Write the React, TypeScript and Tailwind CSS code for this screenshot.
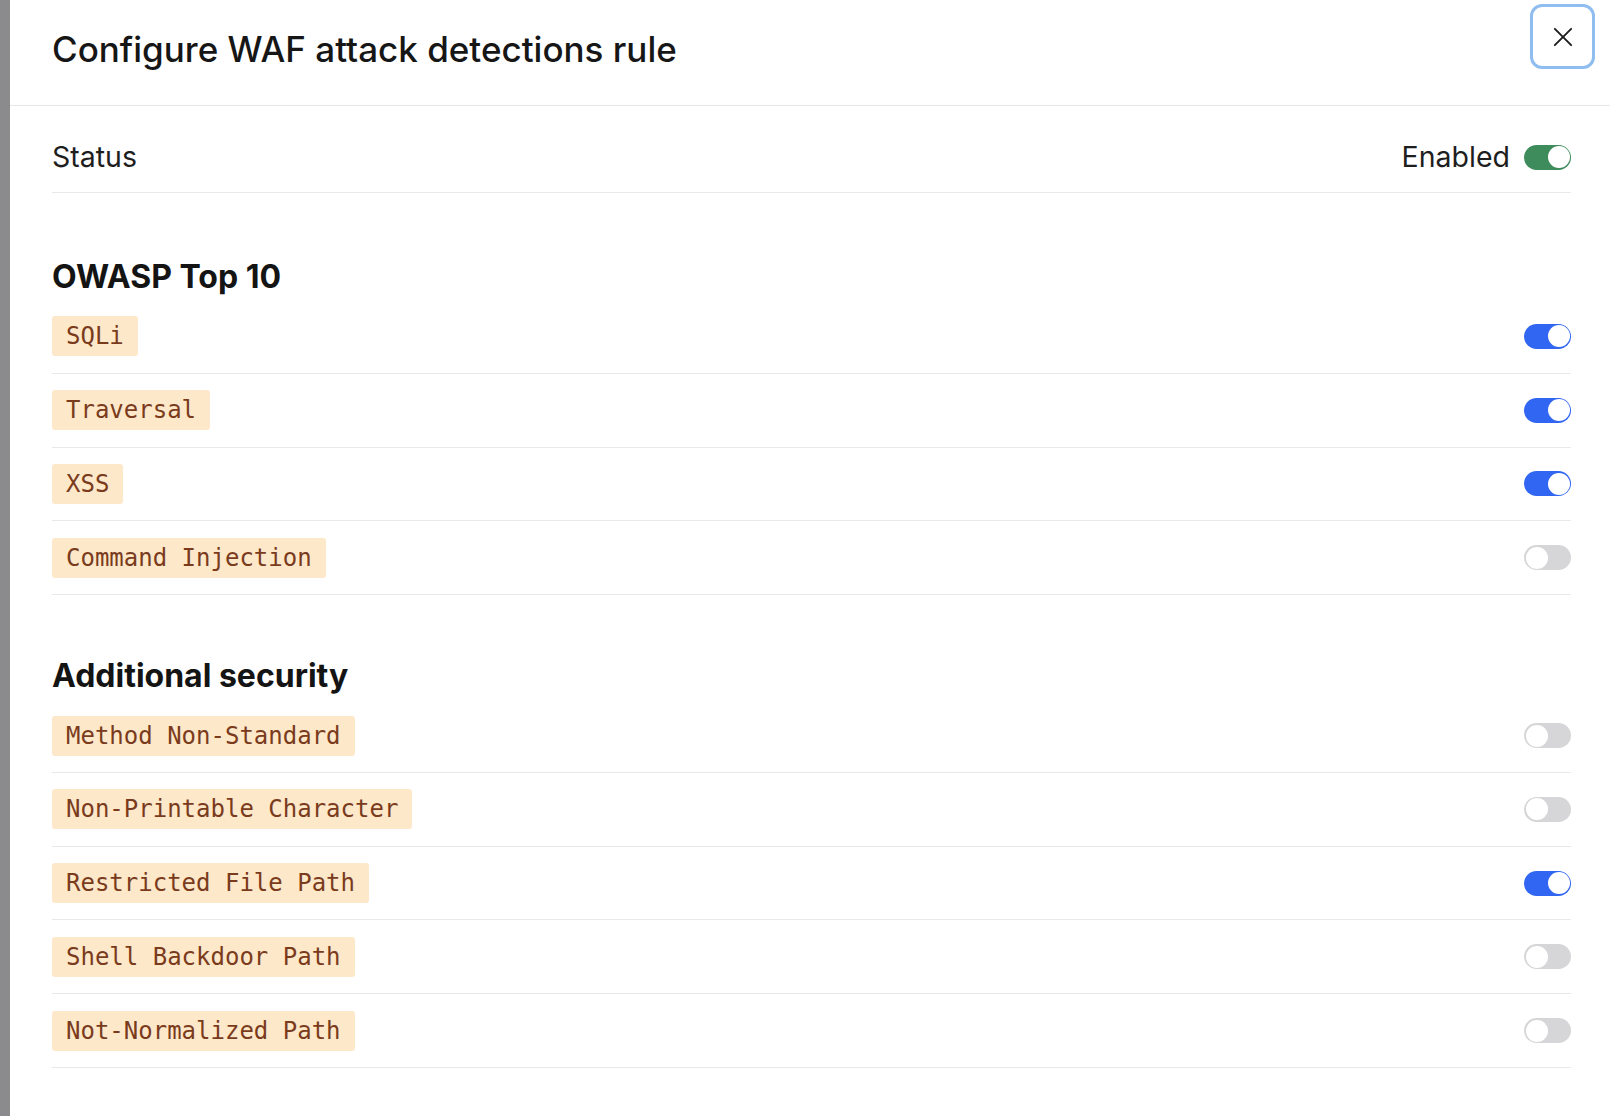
import React, { useState } from 'react';

type Rule = { name: string; on: boolean };

const owasp: Rule[] = [
  { name: 'SQLi', on: true },
  { name: 'Traversal', on: true },
  { name: 'XSS', on: true },
  { name: 'Command Injection', on: false },
];

const additional: Rule[] = [
  { name: 'Method Non-Standard', on: false },
  { name: 'Non-Printable Character', on: false },
  { name: 'Restricted File Path', on: true },
  { name: 'Shell Backdoor Path', on: false },
  { name: 'Not-Normalized Path', on: false },
];

function Toggle({ on, color = 'blue', onClick }: { on: boolean; color?: 'blue' | 'green'; onClick?: () => void }) {
  const track = on ? (color === 'green' ? 'bg-[#3e8c5c]' : 'bg-[#3166f2]') : 'bg-[#d6d6d8]';
  return (
    <button
      onClick={onClick}
      className={`flex h-[25px] w-[47px] items-center rounded-full p-[1.5px] ${track} ${on ? 'justify-end' : 'justify-start'}`}
    >
      <span className="block h-[22px] w-[22px] rounded-full bg-white" />
    </button>
  );
}

function RuleRow({ rule, onToggle }: { rule: Rule; onToggle: () => void }) {
  return (
    <div className="flex items-center justify-between border-b border-[#e8e8ea] py-[16.4px]">
      <span className="flex h-10 items-center rounded-[3px] bg-[#fde8c9] px-[14px] font-['DejaVu_Sans_Mono',monospace] text-[24px] text-[#7a3b1d]">
        {rule.name}
      </span>
      <Toggle on={rule.on} onClick={onToggle} />
    </div>
  );
}

function Section({ title, rules, className }: { title: string; rules: Rule[]; className: string }) {
  const [items, setItems] = useState(rules);
  return (
    <div className={className}>
      <h3 className="mb-[5px] text-[32px] leading-[36px] font-bold text-[#141414]">{title}</h3>
      {items.map((r, i) => (
        <RuleRow
          key={r.name}
          rule={r}
          onToggle={() => setItems(items.map((x, j) => (j === i ? { ...x, on: !x.on } : x)))}
        />
      ))}
    </div>
  );
}

export default function App() {
  const [enabled, setEnabled] = useState(true);

  return (
    <div className="flex h-[1116px] w-[1610px] overflow-hidden bg-[#8b8b8d] font-['Inter',sans-serif]">
      {/* backdrop peeking out on the left */}
      <div className="w-[10px] shrink-0" />

      <div className="flex flex-1 flex-col bg-white">
        <div className="flex h-[106px] shrink-0 items-start justify-between border-b border-[#e6e6e8] pl-[42px] pr-[15px]">
          <h2 className="mt-[30px] text-[35px] leading-[38px] font-medium text-[#161616]">
            Configure WAF attack detections rule
          </h2>
          <button className="mt-[4px] flex h-[65px] w-[65px] items-center justify-center rounded-[12px] border-[3px] border-[#8fbdf0] bg-white">
            <svg width="28" height="28" viewBox="0 0 24 24" fill="none" stroke="#1c1c1c" strokeWidth="1.6" strokeLinecap="round">
              <path d="M5 5l14 14M19 5L5 19" />
            </svg>
          </button>
        </div>

        <div className="pl-[42px] pr-[39px]">
          <div className="flex items-center justify-between border-b border-[#e8e8ea] pt-[33px] pb-[17px]">
            <span className="text-[28.5px] leading-[36px] text-[#1e1e1e]">Status</span>
            <div className="flex items-center gap-[14px]">
              <span className="text-[28.5px] leading-[36px] text-[#1e1e1e]">Enabled</span>
              <Toggle on={enabled} color="green" onClick={() => setEnabled(!enabled)} />
            </div>
          </div>

          <Section title="OWASP Top 10" rules={owasp} className="mt-[66px]" />
          <Section title="Additional security" rules={additional} className="mt-[63px]" />
        </div>
      </div>
    </div>
  );
}
